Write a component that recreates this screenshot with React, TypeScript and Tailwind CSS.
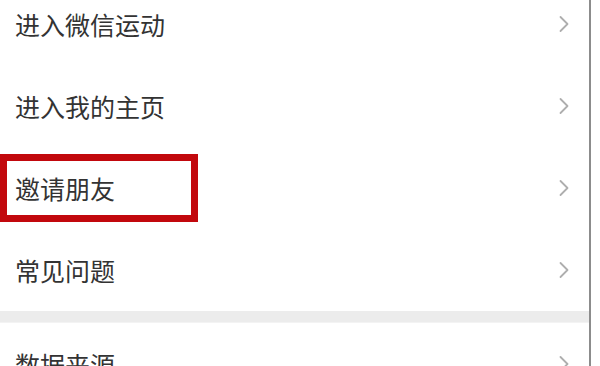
import React from "react";

const ROWS = ["进入微信运动", "进入我的主页", "邀请朋友", "常见问题"];

function Chevron() {
  return (
    <svg width="12" height="20" viewBox="0 0 12 20" fill="none" className="shrink-0">
      <path d="M2.5 3 L9.5 10 L2.5 17" stroke="#aeaeae" strokeWidth="1.8" strokeLinecap="round" strokeLinejoin="round" />
    </svg>
  );
}

function Row({ label }: { label: string }) {
  return (
    <div className="h-[82px] shrink-0 flex items-center justify-between pl-[15px] pr-[19px]">
      <span className="text-[25px] leading-none text-[#333]">{label}</span>
      <Chevron />
    </div>
  );
}

export default function App() {
  return (
    <div
      className="relative w-[600px] h-[366px] overflow-hidden bg-white flex"
      style={{ fontFamily: '"Noto Sans CJK SC", "Noto Sans", sans-serif' }}
    >
      <div className="w-[591px] border-r-[2px] border-[#8c8c8c] flex flex-col -mt-[17px]">
        {ROWS.map((r) => (
          <Row key={r} label={r} />
        ))}
        <div className="h-[12px] bg-[#ececec] border-b border-[#f3f3f3] shrink-0" />
        <Row label="数据来源" />
      </div>

      {/* 红框标注 */}
      <div className="absolute left-0 top-[154px] w-[198px] h-[68px] border-[7px] border-[#c2080d]" />
    </div>
  );
}
